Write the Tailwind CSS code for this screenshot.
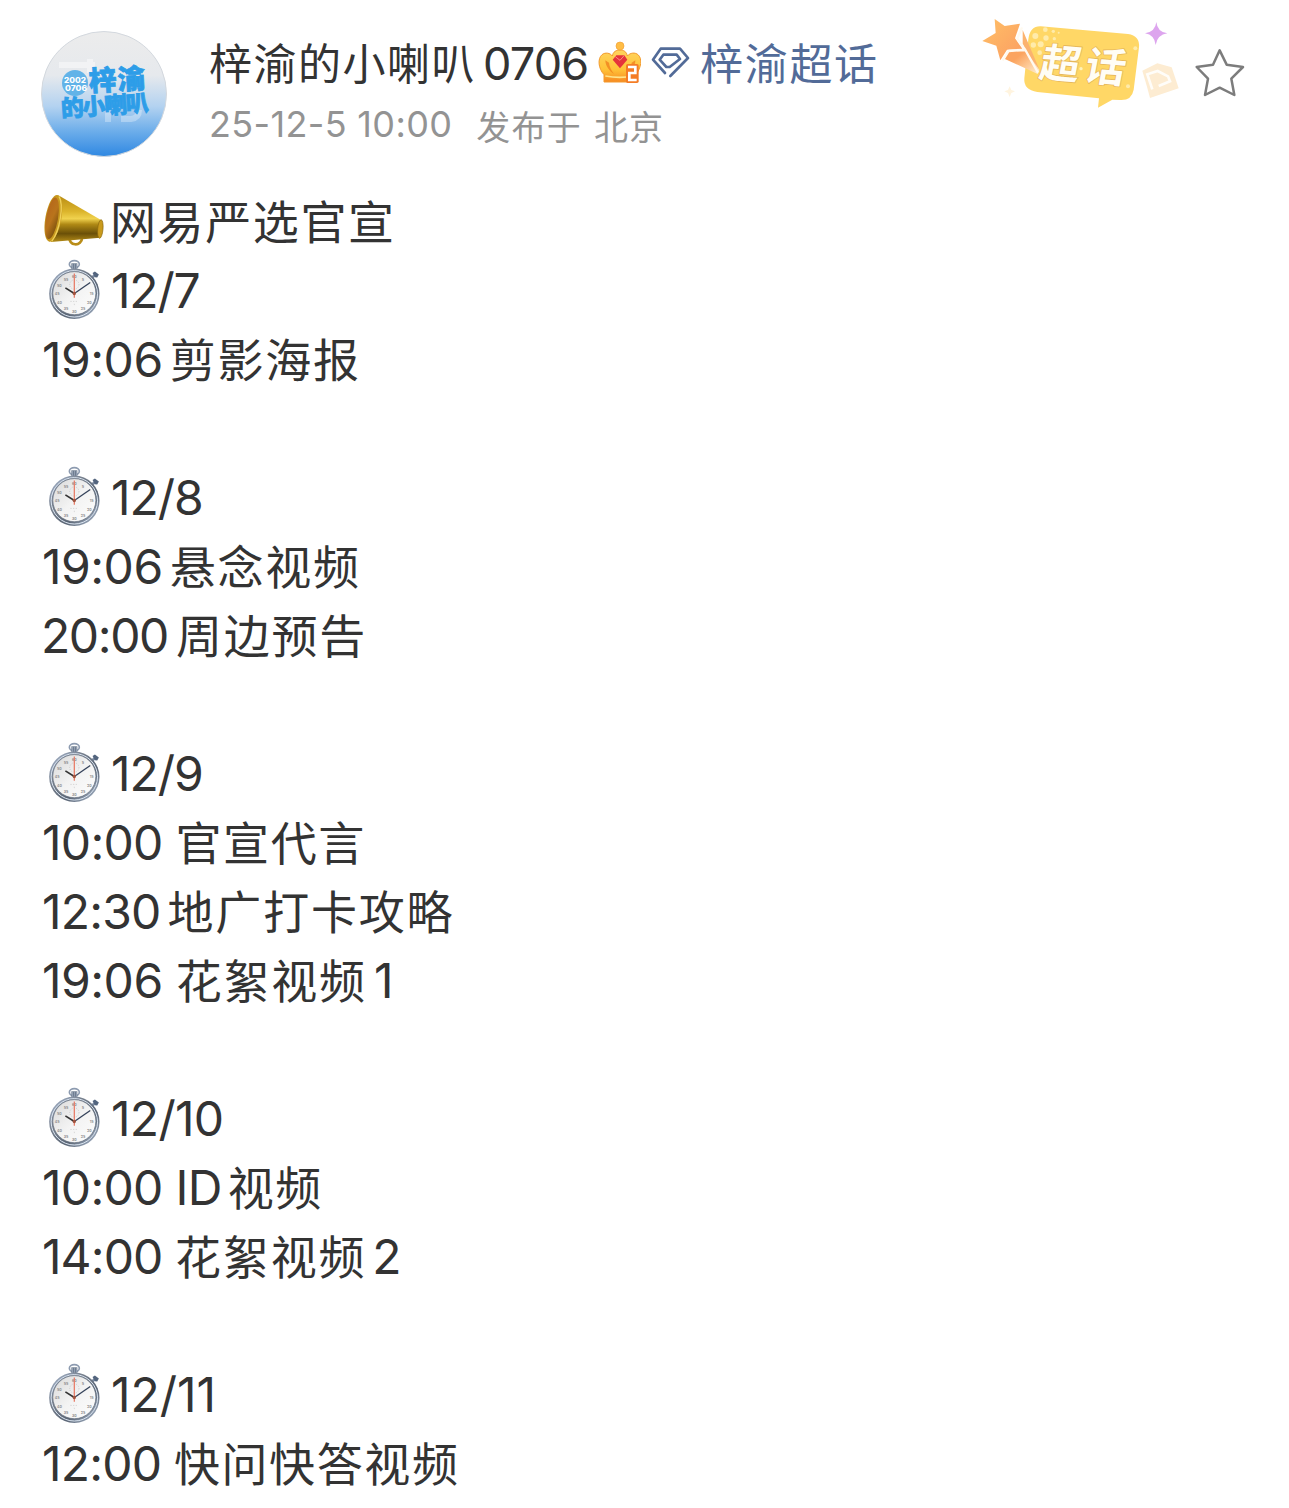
<!DOCTYPE html>
<html lang="zh-CN">
<head>
    <meta charset="UTF-8">
    <meta name="viewport" content="width=device-width, initial-scale=1.0">
    <title>梓渝的小喇叭0706</title>
    <script src="https://cdn.jsdelivr.net/npm/@tailwindcss/browser@4"></script>
</head>
<body class="bg-white text-[#333333] font-['Inter','Noto_Sans_CJK_SC',sans-serif] h-[1508px] overflow-hidden">

    <!-- Shared icons -->
    <svg class="absolute size-0">
        <defs>
            <linearGradient id="rim" x1="0" y1="0" x2="1" y2="1">
                <stop offset="0" stop-color="#a9b9d2" />
                <stop offset=".35" stop-color="#77808d" />
                <stop offset=".65" stop-color="#596474" />
                <stop offset="1" stop-color="#b9c8dc" />
            </linearGradient>
            <linearGradient id="face" x1="0" y1="0" x2="1" y2="1">
                <stop offset="0" stop-color="#d9d9d9" />
                <stop offset=".5" stop-color="#f3f3f3" />
                <stop offset="1" stop-color="#fdfdfd" />
            </linearGradient>
        </defs>
        <symbol id="stopwatch" viewBox="50 220 165 190">
            <ellipse cx="132" cy="239" rx="15" ry="11" fill="none" stroke="#8d9bb0" stroke-width="5" />
            <path d="M123 236h18v19h-18z" fill="#667487" />
            <path d="M126 237v16M132 237v16M138 237v16" stroke="#b7c3d4" stroke-width="2" />
            <path d="M183 282l10-10" stroke="#7d8ca3" stroke-width="8" />
            <path d="M187 265l7-4 12 9-5 9-7-1z" fill="#53657e" />
            <circle cx="132" cy="328" r="76" fill="url(#rim)" />
            <circle cx="132" cy="328" r="70" fill="none" stroke="#dce6f2" stroke-width="3" />
            <circle cx="132" cy="326" r="65" fill="url(#face)" stroke="#606b79" stroke-width="2" />
            <g fill="#888" font-size="11" font-weight="600" text-anchor="middle">
                <text x="132" y="281">60</text>
                <text x="158" y="288">5</text>
                <text x="184" y="333">15</text>
                <text x="177" y="358">20</text>
                <text x="158" y="378">25</text>
                <text x="132" y="386">30</text>
                <text x="107" y="378">35</text>
                <text x="87" y="358">40</text>
                <text x="80" y="333">45</text>
                <text x="87" y="307">50</text>
                <text x="107" y="288">55</text>
            </g>
            <circle cx="132" cy="300" r="14" fill="none" stroke="#bbb" stroke-width="2" stroke-dasharray="3 4" />
            <path d="M120 351h24M132 358v8" stroke="#c9c9c9" stroke-width="2" stroke-dasharray="4 4" />
            <path d="M105 310l27 17" stroke="#333" stroke-width="5" />
            <path d="M132 327l48-33" stroke="#35425a" stroke-width="4" />
            <path d="M132 267v73" stroke="#e8806c" stroke-width="4" />
            <circle cx="132" cy="327" r="5" fill="#a1543f" />
        </symbol>
    </svg>

    <!-- Post header -->
    <header class="flex items-start h-[187px] pl-[41px]">
        <svg class="mt-[31px] size-[126px] shrink-0" viewBox="0 0 126 126">
            <defs>
                <linearGradient id="avatarBg" x1="0" y1="0" x2="0" y2="1">
                    <stop offset="0" stop-color="#ececec" />
                    <stop offset=".35" stop-color="#e6e9ed" />
                    <stop offset=".6" stop-color="#b3d2f0" />
                    <stop offset=".8" stop-color="#6cadea" />
                    <stop offset="1" stop-color="#2f88e2" />
                </linearGradient>
            </defs>
            <circle cx="63" cy="63" r="62.5" fill="url(#avatarBg)" stroke="#d3d8de" stroke-width="1" />
            <g fill="none" stroke="#fff" stroke-opacity=".45" stroke-width="6">
                <path d="M18 34h36M49 28v14" />
                <path d="M67 76v15M80 88h10q8-1 8-9" stroke-opacity=".3" />
            </g>
            <circle cx="34" cy="52" r="13" fill="#62b3e8" />
            <g fill="#fff" font-size="7.500" font-weight="800" font-family="Inter">
                <text x="23" y="51.500" textLength="22" lengthAdjust="spacingAndGlyphs">2002</text>
                <text x="24" y="59.500" textLength="22" lengthAdjust="spacingAndGlyphs">0706</text>
            </g>
            <g fill="#2d9de8" stroke="#2d9de8" stroke-width=".8" font-weight="900" font-family="Noto Sans CJK SC">
                <text transform="rotate(-3 49 61)" x="48.500" y="60" font-size="27.500" textLength="56">梓渝</text>
                <text transform="rotate(-4 21 86)" x="20.500" y="86" font-size="23" textLength="88">的小喇叭</text>
            </g>
        </svg>

        <div class="ml-[42px] mt-[34px] w-[701px]">
            <div class="flex h-[60px] leading-[60px] text-[45px] whitespace-nowrap">
                <div class="w-[389px]"><span class="text-[43px] tracking-[1.5px] leading-none">梓渝的小喇叭</span><span class="ml-[7px] tracking-[-0.8px]">0706</span></div>
                <svg class="mt-[7px] w-[43px] h-[43px] shrink-0" viewBox="22 34 129 129">
                    <defs>
                        <linearGradient id="gold" x1="0" y1="0" x2="0" y2="1">
                            <stop offset="0" stop-color="#ffd45e" />
                            <stop offset=".6" stop-color="#ffc338" />
                            <stop offset="1" stop-color="#f78a22" />
                        </linearGradient>
                    </defs>
                    <path d="M40 157V135C23 117 20 87 34 75c10-8 25-5 31 4 2-13 12-18 23-18s20 5 22 18c8-10 24-12 33-3 12 12 9 37-7 59v22z" fill="url(#gold)" stroke="#f39a2e" stroke-width="3" />
                    <path d="M44 92c0 16 12 33 26 41-8-12-14-22-15-34zM134 92c0 16-10 32-24 40 7-11 12-20 13-33z" fill="#ef7e1c" opacity=".75" />
                    <path d="M44 139q44 8 86 0" stroke="#ffe48b" stroke-width="5" fill="none" />
                    <circle cx="88" cy="49" r="12" fill="#ffbd45" stroke="#f2a037" stroke-width="2" />
                    <path d="M77 77h24l9 13-22 26-22-26z" fill="#e5343b" />
                    <path d="M74 81l14 11 13-15" stroke="#ff8b7d" stroke-width="3" fill="none" />
                    <rect x="106" y="103" width="38" height="57" rx="5" fill="#f47c25" />
                    <path d="M112 112h22v18h-18v21h22" fill="none" stroke="#fff" stroke-width="8" />
                </svg>
                <svg class="ml-[10px] mt-[12px] w-[39px] h-[33px] shrink-0" viewBox="182 48 117 99" fill="none" stroke="#526b98" stroke-width="8" stroke-linecap="round" stroke-linejoin="round">
                    <path d="M224 129L188 89l23-33h58l24 28-53 54" />
                    <path d="M228 111L208 89l11-15h40l10 13-31 24z" />
                </svg>
                <div class="ml-[10px] text-[#526b98]"><span class="text-[43px] tracking-[1.7px] leading-none">梓渝超话</span></div>
            </div>
            <div class="mt-[5px] h-[50px] leading-[50px] text-[36px] text-[#939393] whitespace-nowrap">
                <span class="tracking-[0.35px]">25-12-5 10:00</span><span class="relative top-[3px] ml-[24px] text-[34px] tracking-[1.2px] leading-none">发布于</span><span class="relative top-[3px] ml-[12px] text-[34px] tracking-[1.2px] leading-none">北京</span>
            </div>
        </div>

        <!-- Super topic badge -->
        <svg class="ml-[70px] mt-[15px] w-[200px] h-[95px] shrink-0" viewBox="30 15 600 285">
            <defs>
                <linearGradient id="star" x1="0" y1="0" x2="1" y2="1">
                    <stop offset="0" stop-color="#ffc066" />
                    <stop offset="1" stop-color="#fb9d62" />
                </linearGradient>
                <linearGradient id="tail" x1="1" y1="1" x2="0" y2="0">
                    <stop offset="0" stop-color="#fff1d2" />
                    <stop offset=".6" stop-color="#fba45f" />
                </linearGradient>
            </defs>
            <path d="M212 49L474 72Q510 77 507 112L491 239Q485 272 450 270L427 269 384 293 387 265 202 246Q160 240 163 205L175 88Q180 48 212 49z" fill="#ffd766" />
            <g fill="#ffebaa">
                <circle cx="196" cy="78" r="9" /><circle cx="226" cy="59" r="7" /><circle cx="228" cy="84" r="8" />
                <circle cx="250" cy="64" r="5" /><circle cx="212" cy="103" r="9" /><circle cx="190" cy="105" r="8" />
                <circle cx="253" cy="86" r="5" /><circle cx="209" cy="128" r="7" /><circle cx="496" cy="115" r="6" />
                <circle cx="474" cy="229" r="6" /><circle cx="266" cy="68" r="3" />
            </g>
            <path d="M103 146L112 126 158 120 168 104 208 180 203 192z" fill="url(#tail)" />
            <path d="M158 60L208 178 166 122 158 100z" fill="#fbb36f" />
            <path d="M74 27L104 48 150 41 135 85 157 116 111 119 91 151 79 107 37 93 77 69z" fill="url(#star)" />
            <path d="M156 52L142 86 166 120 204 188M166 120L116 123 98 152" fill="none" stroke="#fffaf0" stroke-width="7" stroke-linejoin="round" />
            <g transform="rotate(5 335 165)" font-family="Noto Sans CJK SC" font-weight="700" font-size="121" fill="#fffdf5" stroke="#e7b85a" stroke-width="5" paint-order="stroke" stroke-linejoin="round">
                <text transform="translate(207 211) skewX(-6)" x="0" y="0">超</text>
                <text transform="translate(343 209) skewX(-6)" x="0" y="0">话</text>
            </g>
            <path d="M559 36Q562 66 592 70 562 74 557 105 554 75 525 70 556 65 559 36z" fill="#dda5ee" />
            <path d="M517 182L562 160 605 172 626 235 540 264 531 230z" fill="#fdecd2" />
            <path d="M547 238L532 193 563 183 594 199 600 214 566 228" fill="none" stroke="#fffdf9" stroke-width="8" />
            <path d="M119 229l5 11 11 4-11 5-5 12-5-12-11-5 11-4z" fill="#fff4df" />
            <circle cx="333" cy="176" r="5" fill="#fff2b8" />
        </svg>

        <!-- Favourite -->
        <svg class="ml-[13px] mt-[46px] w-[54px] h-[54px] shrink-0" viewBox="670 108 162 162" fill="none" stroke="#7c7c7c" stroke-width="7.500" stroke-linejoin="round">
            <path d="M750 121L771 164 820 171 785 206 794 255 750 233 706 255 715 206 681 171 730 164z" />
        </svg>
    </header>

    <!-- Post body -->
    <main class="pl-[42px] text-[48px] leading-[69px] whitespace-nowrap">
        <div class="h-[69px]">
            <svg class="inline-block align-[-8px] w-[64px] h-[54px]" viewBox="39 22 192 162">
                <defs>
                    <linearGradient id="horn" x1="0" y1="0" x2="0" y2="1">
                        <stop offset="0" stop-color="#b88b13" />
                        <stop offset=".35" stop-color="#dcb52c" />
                        <stop offset=".5" stop-color="#f0d24e" />
                        <stop offset=".62" stop-color="#b08a15" />
                        <stop offset=".82" stop-color="#6b5008" />
                        <stop offset="1" stop-color="#b58d18" />
                    </linearGradient>
                    <linearGradient id="mouth" x1="0" y1="0" x2="1" y2="1">
                        <stop offset="0" stop-color="#b5651b" />
                        <stop offset=".5" stop-color="#b9741c" />
                        <stop offset="1" stop-color="#6d4909" />
                    </linearGradient>
                </defs>
                <path d="M121 153c-4 27 37 34 39 0" fill="none" stroke="#b98d19" stroke-width="8" />
                <path d="M88 29L216 103 214 156 66 169z" fill="url(#horn)" />
                <ellipse cx="214" cy="130" rx="8" ry="28" transform="rotate(5 214 130)" fill="#c99a1c" stroke="#8a670d" stroke-width="2" />
                <ellipse cx="73" cy="98" rx="24" ry="71" transform="rotate(10 73 98)" fill="#c7981d" />
                <ellipse cx="69" cy="98" rx="18" ry="63" transform="rotate(10 69 98)" fill="url(#mouth)" />
                <path d="M90 32c15 25 3 104-22 135" fill="none" stroke="#efd05a" stroke-width="4" />
            </svg><span class="ml-[4px] text-[46px] tracking-[1.6px] leading-none">网易严选官宣</span>
        </div>
        <div class="h-[69px]"><svg class="inline-block align-[-13px] w-[55px] h-[63px] ml-[5px]"><use href="#stopwatch" /></svg><span class="ml-[9px] tracking-[-1.2px]">12/7</span></div>
        <div class="h-[69px]"><span class="tracking-[-0.5px]">19:06</span><span class="ml-[7px] text-[46px] tracking-[1.8px] leading-none">剪影海报</span></div>
        <div class="h-[69px]"></div>

        <div class="h-[69px]"><svg class="inline-block align-[-13px] w-[55px] h-[63px] ml-[5px]"><use href="#stopwatch" /></svg><span class="ml-[9px] tracking-[-1px]">12/8</span></div>
        <div class="h-[69px]"><span class="tracking-[-0.5px]">19:06</span><span class="ml-[7px] text-[46px] tracking-[1.8px] leading-none">悬念视频</span></div>
        <div class="h-[69px]"><span class="-ml-px tracking-[-1.4px]">20:00</span><span class="ml-[8px] text-[46px] tracking-[1.8px] leading-none">周边预告</span></div>
        <div class="h-[69px]"></div>

        <div class="h-[69px]"><svg class="inline-block align-[-13px] w-[55px] h-[63px] ml-[5px]"><use href="#stopwatch" /></svg><span class="ml-[9px] tracking-[-1px]">12/9</span></div>
        <div class="h-[69px]"><span class="tracking-[-0.7px]">10:00 </span><span class="text-[46px] tracking-[1.6px] leading-none">官宣代言</span></div>
        <div class="h-[69px]"><span class="tracking-[-0.8px]">12:30</span><span class="ml-[7px] text-[46px] tracking-[1.8px] leading-none">地广打卡攻略</span></div>
        <div class="h-[69px]"><span class="tracking-[-0.5px]">19:06 </span><span class="text-[46px] tracking-[1.8px] leading-none">花絮视频</span><span class="ml-[7px]">1</span></div>
        <div class="h-[69px]"></div>

        <div class="h-[69px]"><svg class="inline-block align-[-13px] w-[55px] h-[63px] ml-[5px]"><use href="#stopwatch" /></svg><span class="ml-[9px] tracking-[-0.7px]">12/10</span></div>
        <div class="h-[69px]"><span class="tracking-[-0.7px]">10:00 ID</span><span class="ml-[6px] text-[46px] tracking-[1.6px] leading-none">视频</span></div>
        <div class="h-[69px]"><span class="tracking-[-0.9px]">14:00 </span><span class="text-[46px] tracking-[1.8px] leading-none">花絮视频</span><span class="ml-[6px]">2</span></div>
        <div class="h-[69px]"></div>

        <div class="h-[69px]"><svg class="inline-block align-[-13px] w-[55px] h-[63px] ml-[5px]"><use href="#stopwatch" /></svg><span class="ml-[9px] tracking-[0]">12/11</span></div>
        <div class="h-[69px]"><span class="tracking-[-0.8px]">12:00 </span><span class="text-[46px] tracking-[1.6px] leading-none">快问快答视频</span></div>
    </main>

</body>
</html>
